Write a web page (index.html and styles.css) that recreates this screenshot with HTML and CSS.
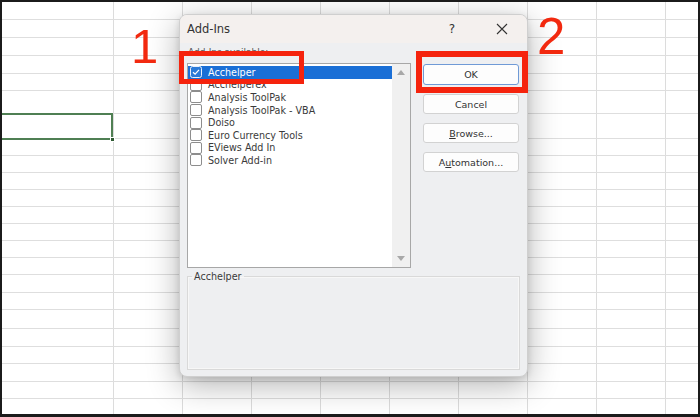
FILE: index.html
```html
<!DOCTYPE html>
<html>
<head>
<meta charset="utf-8">
<link rel="stylesheet" href="styles.css">
</head>
<body>
<div class="screen">
  <div class="sheet">
    <div class="row r18"></div>
    <div class="row r18"></div>
    <div class="row r18"></div>
    <div class="row r18"></div>
    <div class="row r17"></div>
    <div class="row r23"></div>
    <div class="row r25"></div>
    <div class="row r17"></div>
    <div class="row r17"></div>
    <div class="row r17"></div>
    <div class="row r17"></div>
    <div class="row r17"></div>
    <div class="row r17"></div>
    <div class="row r17"></div>
    <div class="row r17"></div>
    <div class="row r18"></div>
    <div class="row r17"></div>
    <div class="row r19"></div>
    <div class="row r18"></div>
    <div class="row r17"></div>
    <div class="row r18"></div>
    <div class="row r17"></div>
    <div class="row rlast"></div>
  </div>
  <div class="selection"><span class="handle"></span></div>

  <div class="dialog">
    <div class="titlebar">
      <span class="title">Add-Ins</span>
      <span class="tbtn help">?</span>
      <span class="tbtn close">
        <svg width="12" height="12" viewBox="0 0 12 12"><path d="M1 1L11 11M11 1L1 11" stroke="#333" stroke-width="1.1" fill="none"/></svg>
      </span>
    </div>
    <div class="body">
      <div class="leftcol">
        <div class="label">Add-Ins available:</div>
        <div class="listbox">
          <div class="items">
            <div class="item selected"><span class="cb checked"><svg width="12" height="12" viewBox="0 0 12 12"><rect x="0.5" y="0.5" width="11" height="11" rx="2" fill="#2a7ad8" stroke="#e8f0fb"/><path d="M3 6.2L5.1 8.2L9 3.8" stroke="#fff" stroke-width="1.2" fill="none"/></svg></span><span>Acchelper</span></div>
            <div class="item"><span class="cb"></span><span>Acchelperex</span></div>
            <div class="item"><span class="cb"></span><span>Analysis ToolPak</span></div>
            <div class="item"><span class="cb"></span><span>Analysis ToolPak - VBA</span></div>
            <div class="item"><span class="cb"></span><span>Doiso</span></div>
            <div class="item"><span class="cb"></span><span>Euro Currency Tools</span></div>
            <div class="item"><span class="cb"></span><span>EViews Add In</span></div>
            <div class="item"><span class="cb"></span><span>Solver Add-in</span></div>
          </div>
          <div class="scrollbar">
            <svg width="8" height="5" viewBox="0 0 8 5"><path d="M0 5L4 0L8 5Z" fill="#a8a8a8"/></svg>
            <svg width="8" height="5" viewBox="0 0 8 5"><path d="M0 0L4 5L8 0Z" fill="#a8a8a8"/></svg>
          </div>
        </div>
      </div>
      <div class="rightcol">
        <div class="btn default">OK</div>
        <div class="btn">Cancel</div>
        <div class="btn"><u>B</u>rowse...</div>
        <div class="btn">A<u>u</u>tomation...</div>
      </div>
    </div>
    <fieldset class="group">
      <legend>Acchelper</legend>
    </fieldset>
  </div>

  <div class="mark mark1"></div>
  <div class="mark mark2"></div>
  <div class="num num1">1</div>
  <div class="num num2">2</div>
</div>
</body>
</html>
```

FILE: styles.css
```css
* { box-sizing: border-box; }
html, body { margin: 0; padding: 0; background: #1b1b1b; }
.screen {
  position: relative;
  width: 700px;
  height: 417px;
  border: 2px solid #1b1b1b;
  border-bottom-width: 3px;
  overflow: hidden;
  background: #fff;
  font-family: "DejaVu Sans", sans-serif;
}
.sheet {
  display: flex;
  flex-direction: column;
  height: 100%;
  background-image:
    linear-gradient(#fff, #fff),
    linear-gradient(to right, #dcdcdc 1px, transparent 1px);
  background-size: 111px 100%, 69px 100%;
  background-position: 0 0, 111px 0;
  background-repeat: no-repeat, repeat-x;
}
.row { border-bottom: 1px solid #dedede; flex: none; }
.r17 { height: 17px; }
.r18 { height: 18px; }
.r19 { height: 19px; }
.r23 { height: 23px; }
.r25 { height: 25px; }
.rlast { flex: 1; border-bottom: 0; }

.selection {
  position: absolute;
  left: -4px;
  top: 111px;
  width: 115px;
  height: 27px;
  border: 2px solid #4f7f53;
}
.handle {
  position: absolute;
  right: -4px;
  bottom: -4px;
  width: 5px;
  height: 5px;
  background: #2f5a33;
  border: 1px solid #fff;
}

.dialog {
  position: absolute;
  left: 177px;
  top: 12px;
  width: 349px;
  height: 363px;
  background: #eeeff1;
  border: 1px solid #cfcfcf;
  border-radius: 8px;
  overflow: hidden;
  box-shadow: 0 8px 32px rgba(0,0,0,0.3), 0 2px 6px rgba(0,0,0,0.12);
  color: #333;
}
.titlebar {
  display: flex;
  align-items: center;
  height: 28px;
  background: #f4f0ee;
  padding-left: 7px;
}
.title { flex: 1; font-size: 11.5px; color: #333; }
.tbtn {
  width: 50px;
  height: 28px;
  display: flex;
  align-items: center;
  justify-content: center;
  font-size: 12px;
  color: #333;
}
.body {
  display: grid;
  grid-template-columns: 224px 96px;
  column-gap: 12px;
  padding: 3px 8px 0 7px;
}
.label {
  font-size: 9px;
  line-height: 12px;
  height: 12px;
  color: #555;
  margin-bottom: 5px;
  padding-left: 1px;
}
.listbox {
  display: flex;
  height: 205px;
  background: #fff;
  border: 1px solid #a7a7a7;
}
.items { flex: 1; padding-top: 2px; }
.item {
  display: flex;
  align-items: center;
  height: 12.6px;
  padding-left: 2px;
  font-size: 9.6px;
  color: #3a3a3a;
  white-space: nowrap;
}
.item.selected { background: #1a6fd6; color: #fff; }
.cb {
  width: 12px;
  height: 12px;
  border: 1px solid #8d8d8d;
  border-radius: 2px;
  background: #fff;
  margin-right: 6px;
  flex: none;
}
.cb.checked { border: 0; background: none; display: flex; }
.scrollbar {
  width: 18px;
  background: #f0f0f0;
  display: flex;
  flex-direction: column;
  align-items: center;
  justify-content: space-between;
  padding: 6px 0 6px;
}
.rightcol {
  display: flex;
  flex-direction: column;
  gap: 9px;
  padding-top: 18px;
}
.btn {
  height: 20px;
  display: flex;
  align-items: center;
  justify-content: center;
  background: #fdfdfd;
  border: 1px solid #d2d2d2;
  border-radius: 3px;
  font-size: 9.5px;
  color: #333;
}
.btn.default { height: 21px; border-color: #6f9ad6; }
.group {
  margin: 3px 7px 0 7px;
  height: 99px;
  border: 1px solid #d9d9d9;
  box-shadow: inset 0 0 0 1px #f7f7f7;
  padding: 0;
}
.group legend {
  font-size: 9.6px;
  color: #3a3a3a;
  padding: 0 2px;
  margin-left: 4px;
}

.mark {
  position: absolute;
  border: 5px solid #f5230d;
}
.mark1 { left: 177px; top: 49px; width: 125px; height: 33px; }
.mark2 { left: 414px; top: 49px; width: 112px; height: 42px; border-width: 6px; }
.num {
  position: absolute;
  font-family: "Liberation Sans", Arial, sans-serif;
  color: #f2290f;
  line-height: 1;
}
.num1 { left: 129px; top: 20px; font-size: 49px; }
.num2 { left: 535px; top: 9px; font-size: 51px; }
```
